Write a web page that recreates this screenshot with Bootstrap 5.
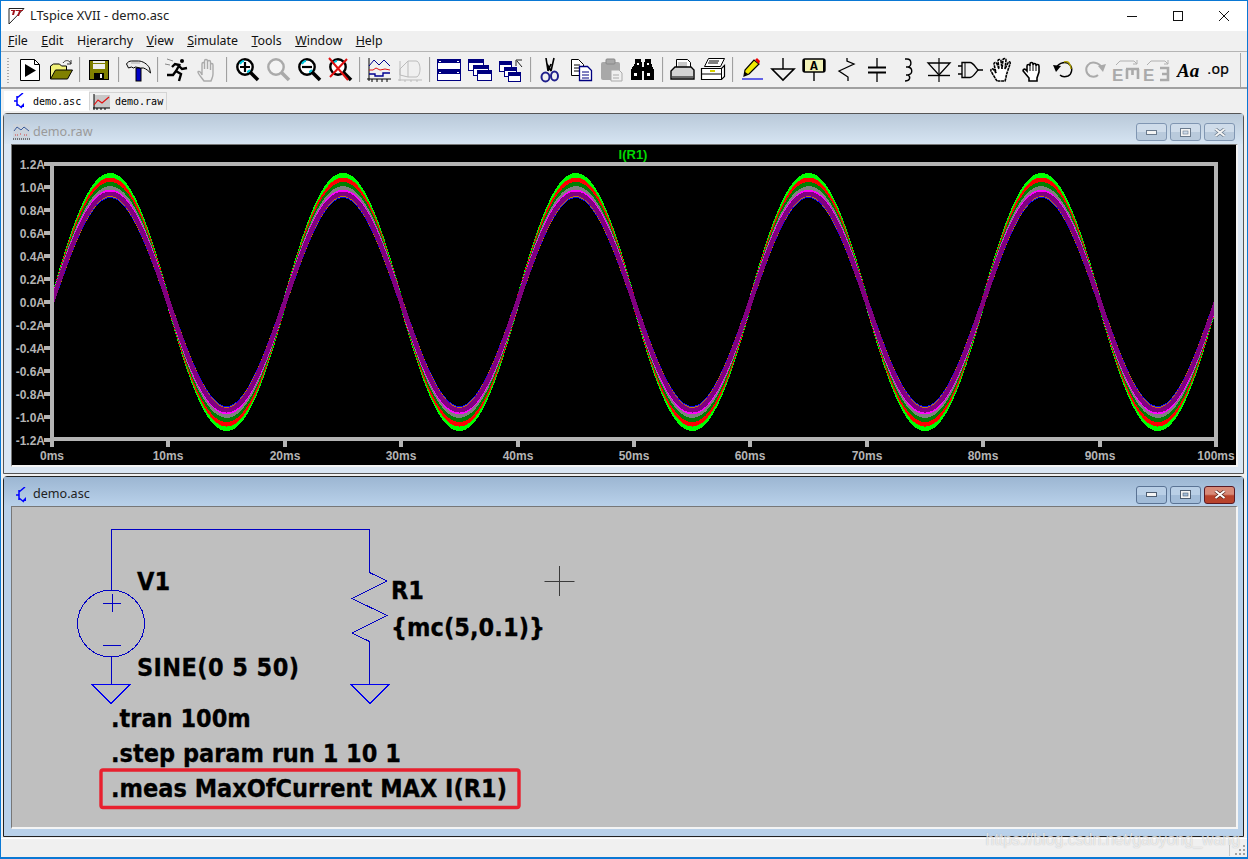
<!DOCTYPE html>
<html lang="en">
<head>
  <meta charset="UTF-8" />
  <meta name="viewport" content="width=device-width, initial-scale=1" />
  <title>LTspice XVII - demo.asc</title>
  <link href="https://cdn.jsdelivr.net/npm/bootstrap@5.3.0/dist/css/bootstrap.min.css" rel="stylesheet" />
  <style>
    html, body { height: 859px; overflow: hidden; background: #f0f0f0; }
    body { font-family: "Noto Sans", "Open Sans", sans-serif; }
    svg { display: block; }
    .app-frame { height: 859px; border: 1px solid #0a78d4; border-bottom-width: 2px; }
    .app-frame > * { flex: none; }
    .app-title { height: 30px; background: #fff; font-size: 12.8px; color: #222; }
    .app-title .logo-box { margin-left: 7px; margin-right: 5px; }
    .sys-btn { width: 46px; height: 30px; }
    .menu-row { height: 21px; background: #f0f0f0; border-bottom: 1px solid #b4b4b4; font-size: 12.4px; padding-left: 7px; gap: 13.5px; }
    .menu-row .nav-link { color: #111; line-height: 20px; }
    .tool-row { height: 37px; background: #f0f0f0; border-bottom: 2px solid #a0a0a0; padding-left: 13px; position: relative; }
    .tool-grip { position: absolute; left: 6px; top: 6px; width: 2px; height: 26px; background: repeating-linear-gradient(#aaa 0 1px, transparent 1px 3px); }
    .tool-end { position: absolute; right: 6px; top: 1px; width: 1px; height: 34px; background: #a8a8a8; }
    .tool-btn { width: 31.2px; height: 34px; flex: none; display: flex; align-items: center; justify-content: center; }
    .tool-sep { width: 2px; height: 25px; margin: 0 2.75px; flex: none; background: #a0a0a0; border-right: 1px solid #e8e8e8; }
    .tab-row { height: 24px; background: #f0f0f0; padding-left: 3px; align-items: flex-start; }
    .doc-tab { font-family: "DejaVu Sans Mono", "Liberation Mono", monospace; font-size: 10px; color: #000; display: flex; align-items: center; }
    .doc-tab.on { width: 85px; height: 20px; margin-top: 2px; background: #fff; padding-left: 8px; gap: 6px; }
    .doc-tab.off { width: 78px; height: 18px; margin-top: 3px; background: #f0f0f0; border: 1px solid #d4d4d4; border-bottom: 0; padding-left: 3px; gap: 5px; }
    .mdi-win { width: 1241px; height: 361px; margin-left: 2px; border: 1px solid #555; border-radius: 4px 4px 0 0; background: #dae6f3; padding: 0 7px 5px 8px; }
    .mdi-win.on { background: #b9d1ea; border-color: #222; margin-top: 2px; }
    .win-head { height: 30px; flex: none; margin: 0 -7px 0 -8px; padding: 6px 8px 0 9px; background: linear-gradient(#b9c9d9, #d6e4f2); color: #9a9a9a; font-size: 12.6px; gap: 3px; }
    .mdi-win.on .win-head { height: 29px; padding-top: 6px; background: linear-gradient(#9cb6d2, #b9d1ea); color: #222; }
    .win-btn { width: 31px; height: 18px; margin-left: 3px; border: 1px solid #8096b2; border-radius: 3px; background: linear-gradient(#cfdcea 50%, #b9cadc 50%); display: flex; align-items: center; justify-content: center; }
    .mdi-win.on .win-btn { background: linear-gradient(#b9cfe6 50%, #a2bcd8 50%); border-color: #5a7394; }
    .mdi-win.on .win-btn.shut { background: linear-gradient(#d88a78 45%, #b8432c 55%); border-color: #5a1a24; }
    .win-body { width: 1224px; height: 320px; flex: none; border-top: 1px solid #777; border-left: 1px solid #777; border-right: 2px solid #f4f4f4; border-bottom: 2px solid #f4f4f4; box-sizing: content-box; margin-left: -1px; }
    .plot-svg { background: #000; }
    .plot-svg text { font-family: "Liberation Sans", Arial, sans-serif; font-weight: 700; font-size: 12px; fill: #b4b4b4; }
    .plot-svg text.trace-name { fill: #00d800; font-size: 13px; }
    .sch-svg { background: #bfbfbf; }
    .sch-svg text { font-family: "DejaVu Sans", "Noto Sans", sans-serif; font-stretch: condensed; font-weight: 700; font-size: 25px; fill: #000; stroke: #000; stroke-width: .3px; }
    .status-row { height: 19px; margin-top: 1px; background: #f0f0f0; border-top: 1px solid #fff; position: relative; }
    .status-grip { position: absolute; right: 1px; bottom: 1px; }
    .status-div { position: absolute; right: 17px; top: 1px; width: 1px; height: 16px; background: #c8c8c8; }
    .wm-text { position: absolute; right: 7px; top: -11px; font-family: "Liberation Sans", Arial, sans-serif; font-size: 15.9px; color: rgba(255,255,255,.7); text-shadow: 0 0 1px rgba(120,120,120,.5); white-space: nowrap; }
  </style>
</head>
<body class="m-0">
  <div class="app-frame d-flex flex-column">

    <!-- title bar -->
    <div class="app-title d-flex align-items-center">
      <svg class="logo-box" width="17" height="18" viewBox="0 0 17 18"><path d="M1 1.5H16L1 17z" fill="#fff" stroke="#222"/><path d="M3 3h5l-1 1-1 4H4l1-4H3zM8 3h7v1h-2l-2 5H9l2-5H8z" fill="#a0141c"/></svg>
      <span>LTspice XVII - demo.asc</span>
      <div class="d-flex ms-auto">
        <div class="sys-btn d-flex align-items-center justify-content-center"><svg width="10" height="10"><path d="M0 5.5h10" stroke="#111"/></svg></div>
        <div class="sys-btn d-flex align-items-center justify-content-center"><svg width="10" height="10"><rect x=".5" y=".5" width="9" height="9" fill="none" stroke="#111"/></svg></div>
        <div class="sys-btn d-flex align-items-center justify-content-center"><svg width="10" height="10"><path d="M0 0l10 10M10 0L0 10" stroke="#111"/></svg></div>
      </div>
    </div>

    <!-- menu -->
    <nav class="nav menu-row">
      <a class="nav-link p-0"><u>F</u>ile</a>
      <a class="nav-link p-0"><u>E</u>dit</a>
      <a class="nav-link p-0">H<u>i</u>erarchy</a>
      <a class="nav-link p-0"><u>V</u>iew</a>
      <a class="nav-link p-0"><u>S</u>imulate</a>
      <a class="nav-link p-0"><u>T</u>ools</a>
      <a class="nav-link p-0"><u>W</u>indow</a>
      <a class="nav-link p-0"><u>H</u>elp</a>
    </nav>

    <!-- toolbar -->
    <div class="tool-row d-flex align-items-center">
      <div class="tool-grip"></div>
      <div class="tool-end"></div>

      <!-- run -->
      <div class="tool-btn"><svg width="26" height="26"><path d="M3.5 2.5h14l5 5v16h-19z" fill="#fff" stroke="#000"/><path d="M17.5 2.5v5h5" fill="none" stroke="#000"/><path d="M8 7l11 6.5L8 20z"/></svg></div>
      <!-- open -->
      <div class="tool-btn"><svg width="26" height="26"><path d="M2.5 22V9l3-2h6l2 2h5v4" fill="#f2f27a" stroke="#000"/><path d="M2.5 22l5-9h17l-5 9z" fill="#808000" stroke="#000"/><path d="M15 6c2-3 5-3 7-1l1 2M23 3v4h-4" fill="none" stroke="#333"/></svg></div>
      <div class="tool-sep"></div>
      <!-- save -->
      <div class="tool-btn"><svg width="26" height="26" shape-rendering="crispEdges"><rect x="3.5" y="3.5" width="19" height="19" fill="#808000" stroke="#000"/><rect x="7" y="4" width="12" height="8" fill="#f0f0f0"/><rect x="7" y="6" width="12" height="1" fill="#808000"/><rect x="8" y="16" width="10" height="6"/><rect x="14" y="17" width="2" height="4" fill="#f0f0f0"/></svg></div>
      <div class="tool-sep"></div>
      <!-- hammer -->
      <div class="tool-btn"><svg width="26" height="26"><rect x="11" y="11" width="5" height="13" fill="#0000c8" stroke="#000"/><path d="M1.500 7c1-2 3-3 5-3h7c4 0 9 3 11 7l1 5c-2-2-4-4-7-5h-3c-2 0-3-1-5-1l-2 1-2-1-3 1z" fill="#ececec" stroke="#000"/><path d="M6 6h9" stroke="#aaa"/></svg></div>
      <div class="tool-sep"></div>
      <!-- halt / runner -->
      <div class="tool-btn"><svg width="26" height="26"><circle cx="18" cy="4" r="2"/><path d="M16 7l-4 7 5 3-2 7M12 14l-3 4-6 0M15 8l-4-1-3 3M15 9l3 3 5-1" fill="none" stroke="#000" stroke-width="2.4"/><path d="M3 2l6 2M1 7l5 1" stroke="#888"/></svg></div>
      <div class="tool-btn"><svg width="26" height="26"><path d="M9 24c-2-3-6-7-6-9 0-1 2-1 3 1l1 2V7c0-2 2.5-2 2.5 0v5V4c0-2 3-2 3 0v8V5c0-2 3-2 3 0v8V8c0-2 2.5-2 2.5 0v9c0 3-1 4-2 7z" fill="#f0f0f0" stroke="#aaa" stroke-width="1.4"/></svg></div>
      <div class="tool-sep"></div>
      <!-- zoom in -->
      <div class="tool-btn"><svg width="26" height="26"><path d="M16 15l8 8" stroke="#000" stroke-width="3.6"/><circle cx="11" cy="10" r="7.7" fill="#fff" stroke="#000" stroke-width="2.4"/><path d="M6 7c1-2 2-3 4-3M16 13c-1 1-2 2-3 2" fill="none" stroke="#00c8e0" stroke-width="2"/><path d="M6 10h10M11 5v10" stroke="#000" stroke-width="2.2"/></svg></div>
      <!-- zoom back (disabled) -->
      <div class="tool-btn"><svg width="26" height="26"><path d="M16 15l8 8" stroke="#aaa" stroke-width="3.6"/><circle cx="11" cy="10" r="7.7" fill="#f4f4f4" stroke="#aaa" stroke-width="2.4"/></svg></div>
      <!-- zoom out -->
      <div class="tool-btn"><svg width="26" height="26"><path d="M16 15l8 8" stroke="#000" stroke-width="3.6"/><circle cx="11" cy="10" r="7.7" fill="#fff" stroke="#000" stroke-width="2.4"/><path d="M6 7c1-2 2-3 4-3M16 13c-1 1-2 2-3 2" fill="none" stroke="#00c8e0" stroke-width="2"/><path d="M6 10h10" stroke="#000" stroke-width="2.2"/></svg></div>
      <!-- zoom cancel -->
      <div class="tool-btn"><svg width="26" height="26"><path d="M16 15l8 8" stroke="#000" stroke-width="3.6"/><circle cx="11" cy="10" r="7.7" fill="#fff" stroke="#000" stroke-width="2.4"/><path d="M6 7c1-2 2-3 4-3" fill="none" stroke="#00c8e0" stroke-width="2"/><path d="M2 1l19 22M20 2L3 20" stroke="#e01010" stroke-width="2"/></svg></div>
      <div class="tool-sep"></div>
      <!-- plot settings -->
      <div class="tool-btn"><svg width="26" height="26"><path d="M3 1v23M1 22h24M6 22v3M11 22v3M16 22v3M21 22v3" stroke="#000"/><path d="M3 9l5-6 5 5 5-5 6 6" fill="none" stroke="#000090"/><path d="M3 13h4l3-2 4 2 5-1 5 1" fill="none" stroke="#e01010"/><path d="M3 17h6v2h8v-3h7" fill="none" stroke="#000090" stroke-width="1.4"/></svg></div>
      <div class="tool-btn"><svg width="26" height="26"><path d="M3 4v20M1 23h24M8 23v2M14 23v2M20 23v2" stroke="#bbb"/><path d="M3 12l8-8h8c3 0 4 5 4 8s-1 8-4 8h-8l-8-2z M11 4v16" fill="none" stroke="#bbb"/></svg></div>
      <div class="tool-sep"></div>
      <!-- tile horizontally -->
      <div class="tool-btn"><svg width="26" height="26" shape-rendering="crispEdges"><rect x="1.5" y="2.5" width="23" height="10" fill="#fff" stroke="#000080"/><rect x="2" y="3" width="22" height="3" fill="#000080"/><rect x="1.5" y="12.5" width="23" height="11" fill="#fff" stroke="#000080"/><rect x="2" y="13" width="22" height="4" fill="#000080"/><path d="M3 4h2M21 4h2M3 15h2M21 15h2" stroke="#fff"/></svg></div>
      <!-- cascade -->
      <div class="tool-btn"><svg width="26" height="26" shape-rendering="crispEdges"><rect x="1.5" y="2.5" width="15" height="11" fill="#fff" stroke="#000080"/><rect x="2" y="3" width="14" height="3" fill="#000080"/><rect x="6.5" y="8.5" width="15" height="10" fill="#fff" stroke="#000080"/><rect x="7" y="9" width="14" height="3" fill="#000080"/><rect x="10.5" y="13.5" width="14" height="10" fill="#fff" stroke="#000080"/><rect x="11" y="14" width="13" height="3" fill="#000080"/></svg></div>
      <!-- cascade with arrow -->
      <div class="tool-btn"><svg width="26" height="26" shape-rendering="crispEdges"><rect x="1.5" y="4.5" width="12" height="10" fill="#fff" stroke="#000080"/><rect x="2" y="5" width="11" height="3" fill="#000080"/><rect x="6.5" y="10.5" width="12" height="9" fill="#fff" stroke="#000080"/><rect x="7" y="11" width="11" height="3" fill="#000080"/><rect x="10.5" y="15.5" width="12" height="9" fill="#fff" stroke="#000080"/><rect x="11" y="16" width="11" height="3" fill="#000080"/><path d="M18 3h6M18 3v6M19 4l5 6" stroke="#222" fill="none" shape-rendering="auto"/></svg></div>
      <div class="tool-sep"></div>
      <!-- cut -->
      <div class="tool-btn"><svg width="26" height="26"><path d="M9 1l2 13 M17 1l-3 13 M11 14l3-7M14 14l-4-7" stroke="#000" stroke-width="1.6" fill="none"/><ellipse cx="8.5" cy="20" rx="4" ry="4.5" fill="#f0f0f0" stroke="#20208c" stroke-width="2"/><ellipse cx="17.5" cy="19" rx="3.5" ry="4.5" fill="#f0f0f0" stroke="#20208c" stroke-width="2"/></svg></div>
      <!-- copy -->
      <div class="tool-btn"><svg width="26" height="26"><path d="M3.5 2.5h7l5 5v11h-12z" fill="#fff" stroke="#000"/><path d="M6 8h6M6 11h6M6 14h6" stroke="#000"/><path d="M11.5 9.5h8l4 4v10h-12z" fill="#fff" stroke="#000080" stroke-width="1.3"/><path d="M14 15h7M14 18h7M14 21h7" stroke="#000080"/></svg></div>
      <!-- paste (disabled) -->
      <div class="tool-btn"><svg width="26" height="26"><rect x="2" y="5" width="19" height="18" rx="2" fill="#a8a8a8"/><rect x="7" y="2" width="9" height="5" rx="1" fill="#a8a8a8" stroke="#888"/><path d="M12 13h8l3 3v8H12z" fill="#f0f0f0" stroke="#aaa"/><path d="M14 18h6M14 21h6" stroke="#aaa"/></svg></div>
      <!-- find -->
      <div class="tool-btn"><svg width="26" height="26" shape-rendering="crispEdges"><path d="M5 2h6v3h1v5h2V5h1V2h6v4l3 7v10h-10V14h-2v9H1V13l4-7z"/><path d="M4 16h3v3H4zM17 16h3v3h-3zM7 6h2v2H7zM17 6h2v2h-2z" fill="#fff"/></svg></div>
      <div class="tool-sep"></div>
      <!-- print preview -->
      <div class="tool-btn"><svg width="26" height="26"><path d="M7.5 2.5h11l3 3v8h-14z" fill="#fff" stroke="#000"/><path d="M9 5h9v7H9z" fill="#c8c8c8"/><path d="M6 10h16l3 3v9H2v-8z" fill="#d4d4d4" stroke="#000" stroke-width="1.4"/><path d="M3 20h21" stroke="#000"/></svg></div>
      <!-- print -->
      <div class="tool-btn"><svg width="26" height="26"><path d="M8.5 1.5h16l-4 8h-16z" fill="#fff" stroke="#000"/><path d="M9 4h10M8 6h10" stroke="#000"/><path d="M1.5 11.5h20l3-3v11l-3 3h-20z" fill="#fff" stroke="#000" stroke-width="1.2"/><path d="M1.5 17h20M21.5 11.5v11" stroke="#000"/><path d="M10 14h5" stroke="#d8d000" stroke-width="2"/></svg></div>
      <div class="tool-sep"></div>
      <!-- wire pencil -->
      <div class="tool-btn"><svg width="26" height="26"><path d="M3 22h21" stroke="#0000e0" stroke-width="1.2"/><path d="M5 19l1-6L15 3l5 4-10 10z" fill="#f0e800" stroke="#000" stroke-width="1.2"/><path d="M5 19l1-4 3 2z"/><path d="M16 3l2-2 3 3-1 3z" fill="#f00000"/></svg></div>
      <!-- ground -->
      <div class="tool-btn"><svg width="26" height="26"><path d="M13 1v11" stroke="#000" stroke-width="1.4"/><path d="M2 12h22L13 23z" fill="none" stroke="#000" stroke-width="1.6"/></svg></div>
      <!-- label -->
      <div class="tool-btn"><svg width="26" height="26"><rect x="2" y="2" width="22" height="13" rx="2" fill="#f2f2b8" stroke="#000" stroke-width="1.4"/><path d="M3 2v13M23 2v13" stroke="#000" stroke-width="2"/><text x="13" y="13" text-anchor="middle" font-family="Liberation Mono, monospace" font-weight="700" font-size="13">A</text><path d="M13 15v9" stroke="#000" stroke-width="1.4"/></svg></div>
      <!-- resistor -->
      <div class="tool-btn"><svg width="26" height="26"><path d="M14 1v3l7 3-15 7 9 6v4" fill="none" stroke="#000" stroke-width="1.3"/></svg></div>
      <!-- capacitor -->
      <div class="tool-btn"><svg width="26" height="26"><path d="M13 1v9M13 16v9" stroke="#000" stroke-width="1.3"/><path d="M4 10.5h18M4 15.5h18" stroke="#000" stroke-width="2"/></svg></div>
      <!-- inductor -->
      <div class="tool-btn"><svg width="26" height="26"><path d="M10 2h2c5 0 5 7 1 8h-2 2c5 1 5 7 0 8h-2 2c3 2 2 6-3 6" fill="none" stroke="#000" stroke-width="1.4"/></svg></div>
      <!-- diode -->
      <div class="tool-btn"><svg width="26" height="26"><path d="M13 1v24" stroke="#000" stroke-width="1.2"/><path d="M2 6h22L13 18z" fill="none" stroke="#000" stroke-width="1.3"/><path d="M2 18.5h22" stroke="#000" stroke-width="1.4"/></svg></div>
      <!-- component -->
      <div class="tool-btn"><svg width="26" height="26"><path d="M1 9h4M1 17h4M20 13h6" stroke="#000" stroke-width="1.3"/><path d="M5 5.5h8c3 0 5 4 8 7.5-3 3.500-5 7.500-8 7.500H5z" fill="none" stroke="#000" stroke-width="1.4"/><path d="M8 6v14" stroke="#000"/></svg></div>
      <!-- move hand -->
      <div class="tool-btn"><svg width="26" height="26"><path d="M8 24c-2-3-5-8-6-10-1-2 2-3 3-1l2 3L5 7c0-2 2-2 3 0l2 5-1-8c0-2 3-2 3 0l1 8 1-9c0-2 3-2 3 0l-1 9 3-6c1-2 3-1 2 1l-3 9c-1 3-1 5-2 8z" fill="#fff" stroke="#000" stroke-width="1.6" stroke-dasharray="3 .6"/></svg></div>
      <!-- drag hand -->
      <div class="tool-btn"><svg width="26" height="26"><path d="M9 24v-3L4 15c-2-2 0-4 2-2l1 1V9c0-2 3-2 3 0V7c0-2 3-2 3 0v1c0-2 3-2 3 0v1c0-2 3-2 3 0v6l-2 6v3z" fill="#fff" stroke="#000" stroke-width="1.6"/><path d="M10 9v5M13 8v6M16 9v5" stroke="#000"/></svg></div>
      <!-- undo -->
      <div class="tool-btn"><svg width="26" height="26"><path d="M5 11c3-6 11-7 14-3 3 3 2 9-2 11-3 1-6 1-8-1" fill="none" stroke="#000" stroke-width="1.4"/><path d="M13 5c3-1 5 0 6 3 1 1 1 2 1 4" fill="none" stroke="#b0a000" stroke-width="1.4"/><path d="M2 8l8 1-5 6z"/></svg></div>
      <!-- redo (disabled) -->
      <div class="tool-btn"><svg width="26" height="26"><path d="M20 11c-3-6-11-7-14-3-3 3-2 9 2 11 3 1 6 1 8-1" fill="none" stroke="#aaa" stroke-width="2"/><path d="M24 7l-8 2 5 6z" fill="#aaa"/></svg></div>
      <!-- rotate / mirror text commands (disabled) -->
      <div class="tool-btn"><svg width="28" height="26" overflow="visible"><path d="M4 8l4-4h14l3 3M25 3v4h-4" fill="none" stroke="#b0b0b0"/><text x="0" y="24" font-family="Liberation Sans, sans-serif" font-weight="700" font-size="17" fill="#aaa">E</text><path d="M14 12h13M15 12v10M20.500 12v6M26 12v10" fill="none" stroke="#aaa" stroke-width="2.6"/></svg></div>
      <div class="tool-btn"><svg width="28" height="26" overflow="visible"><path d="M4 8l4-4h14l3 3M25 3v4h-4" fill="none" stroke="#b0b0b0"/><text x="0" y="24" font-family="Liberation Sans, sans-serif" font-weight="700" font-size="17" fill="#aaa">E</text><path d="M17 11h8v12h-8M19 17h6" fill="none" stroke="#aaa" stroke-width="2.6"/></svg></div>
      <!-- text -->
      <div class="tool-btn"><svg width="26" height="26"><text x="1" y="20" font-family="Liberation Serif, serif" font-style="italic" font-weight="700" font-size="19">Aa</text></svg></div>
      <!-- spice directive -->
      <div class="tool-btn"><svg width="26" height="26"><text x="0" y="17" font-family="DejaVu Sans, sans-serif" font-size="14" stroke="#000" stroke-width=".2">.op</text></svg></div>
    </div>

    <!-- document tabs -->
    <div class="tab-row nav">
      <div class="doc-tab on">
        <svg width="15" height="16" viewBox="0 0 15 16"><path d="M2 8h3M5 3v10M5 5l6-5M5 11l5 4" fill="none" stroke="#0000ff" stroke-width="1.5"/><path d="M8 14h4v-4z" fill="#0000ff"/></svg>
        <span>demo.asc</span>
      </div>
      <div class="doc-tab off">
        <svg width="17" height="16" viewBox="0 0 17 16"><rect x="1" y="1" width="16" height="13" fill="#c8c8c8"/><path d="M1 0v16M0 14h17M4 14v2M8 14v2M12 14v2" stroke="#000"/><path d="M1 11l4-5 4 3 7-6" fill="none" stroke="#e01010" stroke-width="1.2"/></svg>
        <span>demo.raw</span>
      </div>
    </div>

    <!-- waveform window -->
    <div class="mdi-win d-flex flex-column">
      <div class="win-head d-flex align-items-center">
        <svg width="17" height="16" viewBox="0 0 17 16"><rect width="17" height="16" fill="#cbd3dc"/><path d="M1 7l3-4 4 3 3-3 5 4" fill="none" stroke="#3c5c9c"/><path d="M2 11h3M7 10h2M11 11h3" stroke="#d04040" stroke-dasharray="1 1"/><path d="M0 15h17" stroke="#111" stroke-dasharray="1 1"/></svg>
        <span>demo.raw</span>
        <div class="d-flex ms-auto">
          <div class="win-btn"><svg width="11" height="5"><rect x=".5" y=".5" width="10" height="4" fill="#f4f4f4" stroke="#6a7a8c"/></svg></div>
          <div class="win-btn"><svg width="11" height="9"><rect x=".5" y=".5" width="10" height="8" fill="#f4f4f4" stroke="#6a7a8c"/><rect x="3" y="3" width="5" height="3" fill="#cfdcea" stroke="#6a7a8c" stroke-width=".6"/></svg></div>
          <div class="win-btn shut"><svg width="12" height="9"><path d="M1.500 1l9 7M10.500 1l-9 7" stroke="#6a7a8c" stroke-width="3.4"/><path d="M1.500 1l9 7M10.500 1l-9 7" stroke="#f4f4f4" stroke-width="2"/></svg></div>
        </div>
      </div>
      <div class="win-body">
        <svg id="plot" class="plot-svg" width="1224" height="320" viewBox="12 145 1224 320"></svg>
      </div>
    </div>

    <!-- schematic window -->
    <div class="mdi-win on d-flex flex-column">
      <div class="win-head d-flex align-items-center">
        <svg width="17" height="16" viewBox="0 0 15 16"><path d="M2 8h3M5 3v10M5 5l6-5M5 11l5 4" fill="none" stroke="#0000ff" stroke-width="1.5"/><path d="M8 14h4v-4z" fill="#0000ff"/></svg>
        <span>demo.asc</span>
        <div class="d-flex ms-auto">
          <div class="win-btn"><svg width="11" height="5"><rect x=".5" y=".5" width="10" height="4" fill="#f4f4f4" stroke="#4c5c70"/></svg></div>
          <div class="win-btn"><svg width="11" height="9"><rect x=".5" y=".5" width="10" height="8" fill="#f4f4f4" stroke="#4c5c70"/><rect x="3" y="3" width="5" height="3" fill="#a2bcd8" stroke="#4c5c70" stroke-width=".6"/></svg></div>
          <div class="win-btn shut"><svg width="12" height="9"><path d="M1.500 1l9 7M10.500 1l-9 7" stroke="#5a2a20" stroke-width="3.4"/><path d="M1.500 1l9 7M10.500 1l-9 7" stroke="#fff" stroke-width="2"/></svg></div>
        </div>
      </div>
      <div class="win-body">
        <svg class="sch-svg" width="1224" height="320" viewBox="12 507 1224 320">
          <g fill="none" stroke="#0000c4" stroke-width="1" shape-rendering="crispEdges">
            <path d="M111.500 590V529.500H369.500V572.500L387 581 352 598.500 387 615.500 352 633 369.500 641.500V684M111.500 657V684"/>
            <circle cx="111" cy="623.500" r="33.500"/>
            <path d="M103 603h18M112 594v18M103 645.500h18"/>
          </g>
          <g fill="none" stroke="#0000f0" stroke-width="1" shape-rendering="crispEdges">
            <path d="M92 684.500h38l-19 19zM351 684.500h38l-19 19z"/>
          </g>
          <path d="M559.500 566v30M544.500 581.500h30" stroke="#3a3a3a" stroke-width="1"/>
          <text x="137" y="590">V1</text>
          <text x="391" y="599">R1</text>
          <text x="391" y="636" textLength="154">{mc(5,0.1)}</text>
          <text x="137" y="676" textLength="162">SINE(0 5 50)</text>
          <text x="111" y="727">.tran 100m</text>
          <text x="111" y="762">.step param run 1 10 1</text>
          <text x="111" y="797">.meas MaxOfCurrent MAX I(R1)</text>
          <rect x="101" y="770" width="418" height="37.500" rx="2" fill="none" stroke="#e8202e" stroke-width="3.4"/>
        </svg>
      </div>
    </div>

    <!-- status bar -->
    <div class="status-row">
      <div class="status-div"></div>
      <svg class="status-grip" width="12" height="12"><path d="M9 1h2v2H9zM5 5h2v2H5zM9 5h2v2H9zM1 9h2v2H1zM5 9h2v2H5zM9 9h2v2H9z" fill="#a0a0a0"/></svg>
      <span class="wm-text">https://blog.csdn.net/gaoyong_wang</span>
    </div>
  </div>

  <script src="https://cdn.jsdelivr.net/npm/bootstrap@5.3.0/dist/js/bootstrap.bundle.min.js"></script>
  <script>
    const svgNs = "http://www.w3.org/2000/svg";
    const plot = document.getElementById("plot");
    const X0 = 52, X_STEP = 116.4, Y0 = 302, Y_PER_AMP = 114.6;

    function add(tag, attrs, text) {
      const el = document.createElementNS(svgNs, tag);
      for (const k in attrs) el.setAttribute(k, attrs[k]);
      if (text) el.textContent = text;
      plot.appendChild(el);
      return el;
    }

    const runs = [
      ["#00ff00", 126.7], ["#ff0000", 122.2], ["#008000", 117.7], ["#808080", 113.5],
      ["#ff00ff", 110], ["#0000ff", 106.3], ["#c08000", 107.3], ["#800080", 108.2]
    ];
    runs.forEach(([color, amp]) => {
      let pts = "";
      for (let x = 0; x <= 1164; x++) {
        const y = Y0 - amp * Math.sin(2 * Math.PI * x / 232.8);
        pts += (X0 + x) + "," + y.toFixed(1) + " ";
      }
      add("polyline", { points: pts, fill: "none", stroke: color, "stroke-width": 4.6, "shape-rendering": "crispEdges" });
    });

    const axis = { stroke: "#b4b4b4", "stroke-width": 4, "shape-rendering": "crispEdges" };
    add("rect", { x: 52, y: 164, width: 1164, height: 275, fill: "none", ...axis });
    for (let i = 0; i <= 10; i++) {
      const x = Math.round(X0 + i * X_STEP);
      add("line", { x1: x, x2: x, y1: 439, y2: 447, ...axis });
      add("text", { x: x, y: 460, "text-anchor": "middle" }, (i * 10) + "ms");
    }
    for (let i = -6; i <= 6; i++) {
      const amps = i * 0.2;
      const y = Math.round(Y0 - amps * Y_PER_AMP);
      add("line", { x1: 44, x2: 52, y1: y, y2: y, ...axis });
      add("text", { x: 45, y: y + 5, "text-anchor": "end" }, amps.toFixed(1) + "A");
    }
    add("text", { x: 633, y: 159, "text-anchor": "middle", class: "trace-name" }, "I(R1)");
  </script>
</body>
</html>
